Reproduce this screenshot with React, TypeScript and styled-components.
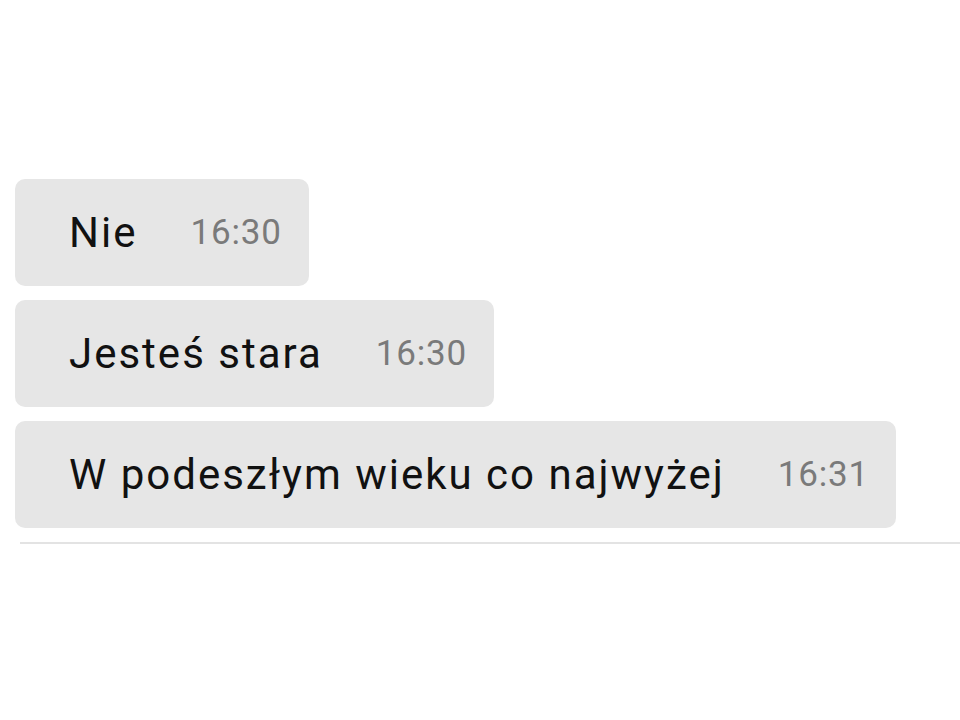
import styled, { createGlobalStyle } from "styled-components";

const GlobalStyle = createGlobalStyle`
  html, body {
    margin: 0;
    padding: 0;
    background: #ffffff;
  }
  body {
    font-family: Roboto, "Liberation Sans", sans-serif;
  }
`;

const Page = styled.div`
  width: 960px;
  height: 720px;
  box-sizing: border-box;
  padding-top: 179px;
  overflow: hidden;
`;

const Thread = styled.div`
  display: flex;
  flex-direction: column;
  align-items: flex-start;
  gap: 14px;
  padding-left: 15px;
`;

const Bubble = styled.div`
  display: flex;
  align-items: center;
  height: 107px;
  box-sizing: border-box;
  padding: 0 27px 0 54px;
  background: #e6e6e6;
  border-radius: 10px;
`;

const Text = styled.span`
  font-size: 42px;
  color: #111111;
  letter-spacing: 2px;
  white-space: nowrap;
`;

const Time = styled.span`
  margin-left: 53px;
  font-size: 35px;
  letter-spacing: 0.8px;
  color: #7a7a7a;
  white-space: nowrap;
`;

const Divider = styled.hr`
  margin: 14px 0 0 20px;
  border: none;
  height: 2px;
  background: #e3e3e3;
`;

const messages = [
  { text: "Nie", time: "16:30" },
  { text: "Jesteś stara", time: "16:30" },
  { text: "W podeszłym wieku co najwyżej", time: "16:31" },
];

export default function App() {
  return (
    <>
      <GlobalStyle />
      <Page>
        <Thread>
          {messages.map((m, i) => (
            <Bubble key={i}>
              <Text>{m.text}</Text>
              <Time>{m.time}</Time>
            </Bubble>
          ))}
        </Thread>
        <Divider />
      </Page>
    </>
  );
}
